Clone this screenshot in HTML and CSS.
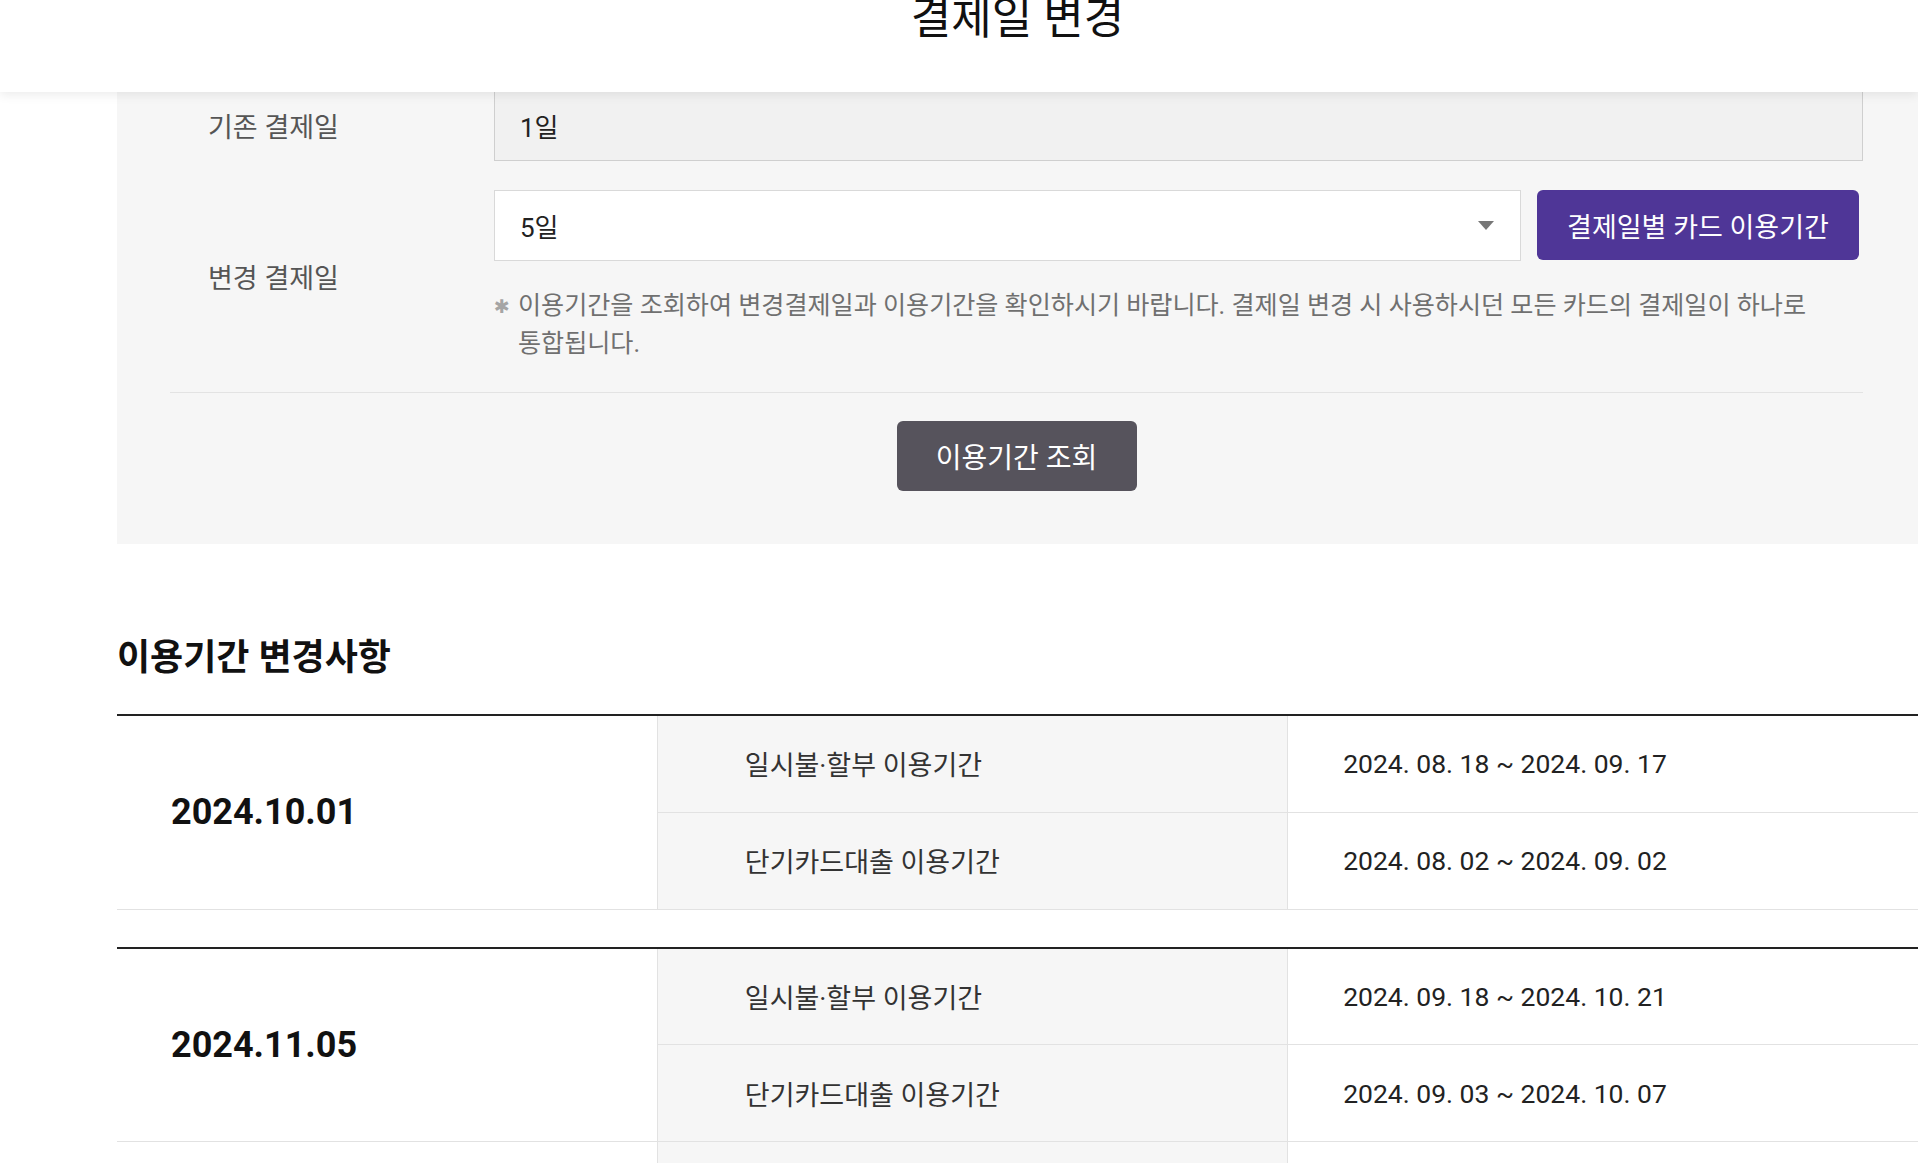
FILE: index.html
```html
<!DOCTYPE html>
<html lang="ko">
<head>
    <meta charset="UTF-8">
    <meta name="viewport" content="width=device-width, initial-scale=1.0">
    <title>결제일 변경</title>
    <link rel="stylesheet" href="styles.css">
</head>
<body>
    <header class="top-bar">
        <h1 class="page-title">결제일 변경</h1>
    </header>

    <main class="content">
        <section class="form-panel">
            <div class="form-row">
                <div class="form-label">기존 결제일</div>
                <div class="form-field">
                    <div class="input readonly">1일</div>
                </div>
            </div>

            <div class="form-row row-change">
                <div class="form-label">변경 결제일</div>
                <div class="form-field">
                    <div class="select-line">
                        <div class="select">
                            <span>5일</span>
                            <span class="arrow"></span>
                        </div>
                        <button class="btn-purple">결제일별 카드 이용기간</button>
                    </div>
                    <p class="note">
                        <span class="star">✱</span>
                        <span>이용기간을 조회하여 변경결제일과 이용기간을 확인하시기 바랍니다. 결제일 변경 시 사용하시던 모든 카드의 결제일이 하나로 통합됩니다.</span>
                    </p>
                </div>
            </div>

            <div class="form-actions">
                <button class="btn-dark">이용기간 조회</button>
            </div>
        </section>

        <section class="change-list">
            <h2 class="section-title">이용기간 변경사항</h2>

            <table class="period-table">
                <colgroup>
                    <col class="col-date">
                    <col class="col-label">
                    <col class="col-value">
                </colgroup>
                <tr>
                    <td class="date" rowspan="2">2024.10.01</td>
                    <td class="label">일시불·할부 이용기간</td>
                    <td class="value">2024. 08. 18 ~ 2024. 09. 17</td>
                </tr>
                <tr>
                    <td class="label">단기카드대출 이용기간</td>
                    <td class="value">2024. 08. 02 ~ 2024. 09. 02</td>
                </tr>
            </table>

            <table class="period-table">
                <colgroup>
                    <col class="col-date">
                    <col class="col-label">
                    <col class="col-value">
                </colgroup>
                <tr>
                    <td class="date" rowspan="2">2024.11.05</td>
                    <td class="label">일시불·할부 이용기간</td>
                    <td class="value">2024. 09. 18 ~ 2024. 10. 21</td>
                </tr>
                <tr>
                    <td class="label">단기카드대출 이용기간</td>
                    <td class="value">2024. 09. 03 ~ 2024. 10. 07</td>
                </tr>
                <tr>
                    <td class="date" rowspan="2">2024.12.05</td>
                    <td class="label">일시불·할부 이용기간</td>
                    <td class="value">2024. 10. 22 ~ 2024. 11. 20</td>
                </tr>
                <tr>
                    <td class="label">단기카드대출 이용기간</td>
                    <td class="value">2024. 10. 08 ~ 2024. 11. 04</td>
                </tr>
            </table>
        </section>
    </main>
</body>
</html>
```

FILE: styles.css
```css
* {
    margin: 0;
    padding: 0;
    box-sizing: border-box;
}

body {
    font-family: Roboto, "Noto Sans CJK KR", sans-serif;
    color: #222;
    background-color: #fff;
    word-break: keep-all;
}

/* Header */
.top-bar {
    position: relative;
    z-index: 2;
    height: 92px;
    padding-left: 117px;
    background-color: #fff;
    box-shadow: 0 3px 10px rgba(0, 0, 0, 0.08);
    overflow: hidden;
}

.page-title {
    margin-top: -3px;
    font-size: 44px;
    line-height: 1;
    font-weight: 400;
    color: #111;
    text-align: center;
}

.content {
    margin-left: 117px;
}

/* Form panel */
.form-panel {
    margin-top: -2px;
    padding: 0 55px 53px 53px;
    background-color: #f6f6f6;
}

.form-row {
    display: flex;
    align-items: center;
}

.row-change {
    margin-top: 29px;
    padding-bottom: 29px;
    border-bottom: 1px solid #e3e3e3;
}

.form-label {
    flex: 0 0 324px;
    padding-left: 38px;
    font-size: 27px;
    color: #555;
}

.form-field {
    flex: 1;
}

.input {
    display: flex;
    align-items: center;
    height: 71px;
    padding: 0 25px;
    border: 1px solid #d9d9d9;
    background-color: #fff;
    font-size: 26px;
    color: #222;
}

.input.readonly {
    background-color: #f1f1f1;
    border-color: #cfcfcf;
}

.select-line {
    display: flex;
    gap: 16px;
    margin-right: 4px;
}

.select {
    flex: 1;
    display: flex;
    align-items: center;
    justify-content: space-between;
    height: 71px;
    padding: 0 26px 0 25px;
    border: 1px solid #d9d9d9;
    background-color: #fff;
    font-size: 26px;
}

.arrow {
    width: 0;
    height: 0;
    border-top: 9px solid #777;
    border-left: 8px solid transparent;
    border-right: 8px solid transparent;
}

.btn-purple {
    flex: 0 0 322px;
    height: 70px;
    border: none;
    border-radius: 6px;
    background-color: #4f3697;
    color: #fff;
    font-family: inherit;
    font-size: 27px;
    cursor: pointer;
}

.note {
    display: flex;
    margin-top: 26px;
    font-size: 25.1px;
    line-height: 38px;
    color: #707070;
}

.note .star {
    flex: 0 0 24px;
    font-family: "DejaVu Sans", sans-serif;
    font-size: 19px;
    color: #a5a5a5;
}

.form-actions {
    padding-top: 28px;
    text-align: center;
}

.btn-dark {
    width: 240px;
    height: 70px;
    border: none;
    border-radius: 6px;
    background-color: #56535c;
    color: #fff;
    font-family: inherit;
    font-size: 28px;
    cursor: pointer;
}

/* Change list */
.section-title {
    margin: 89px 0 31px;
    font-size: 36px;
    line-height: 50px;
    font-weight: 700;
    color: #111;
}

.period-table {
    width: 100%;
    border-collapse: collapse;
    table-layout: fixed;
    border-top: 2px solid #222;
}

.period-table + .period-table {
    margin-top: 37px;
}

.col-date {
    width: 30%;
}

.col-label,
.col-value {
    width: 35%;
}

.period-table td {
    height: 97px;
    border-bottom: 1px solid #e2e2e2;
    vertical-align: middle;
}

.period-table .date {
    padding-left: 54px;
    font-size: 36px;
    font-weight: 700;
    color: #111;
}

.period-table .label {
    padding-left: 87px;
    background-color: #f6f6f6;
    border-left: 1px solid #e2e2e2;
    border-right: 1px solid #e2e2e2;
    font-size: 27px;
    color: #333;
}

.period-table .value {
    padding-left: 55px;
    font-size: 26.5px;
    color: #222;
}
```
